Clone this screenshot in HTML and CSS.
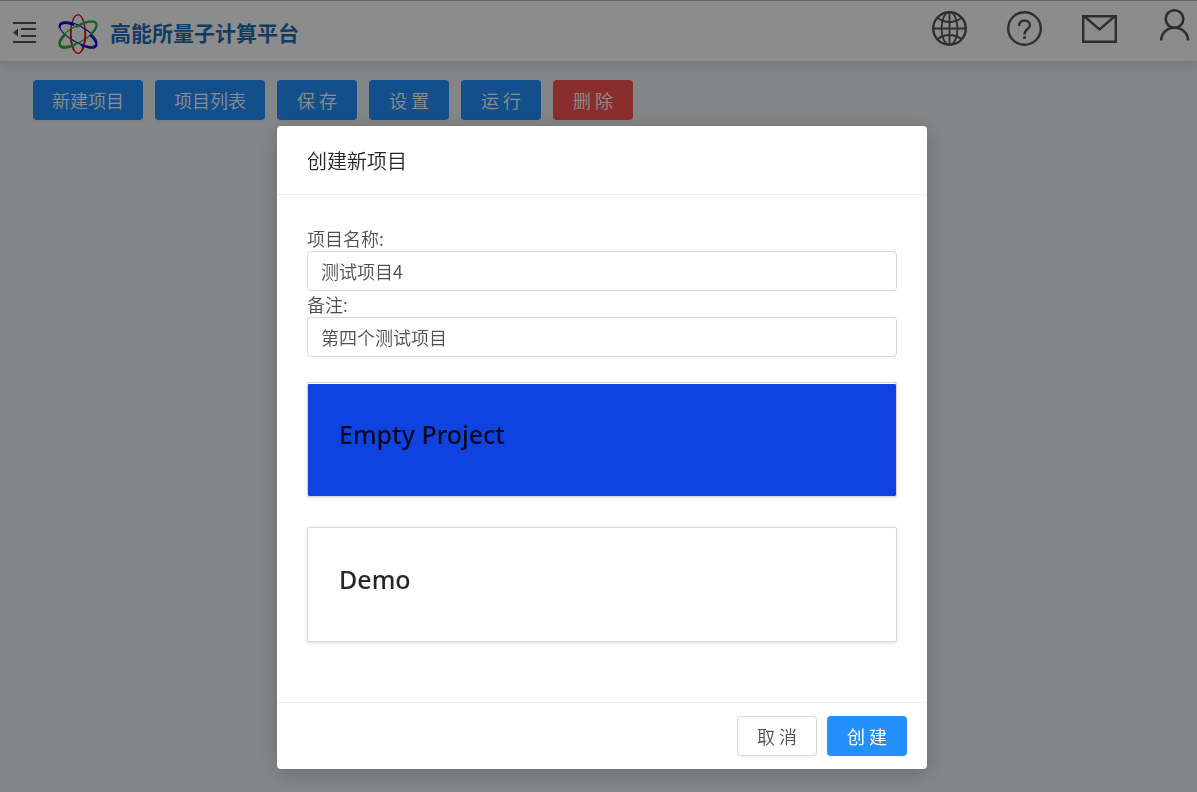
FILE: index.html
```html
<!DOCTYPE html>
<html lang="zh-CN">
<head>
<meta charset="utf-8">
<meta name="viewport" content="width=device-width, initial-scale=1">
<title>高能所量子计算平台</title>
<link rel="stylesheet" href="styles.css">
</head>
<body>
<header class="header">
  <button class="icon-btn menu-btn" type="button" aria-label="收起菜单">
    <svg width="24" height="22" viewBox="0 0 24 22" fill="none" stroke="currentColor" stroke-width="2">
      <path d="M1 1H24M9 7H24M9 14H24M1 20H24"/>
      <path d="M1 10.500L6 6.500V14.500Z" fill="currentColor" stroke="none"/>
    </svg>
  </button>
  <svg class="logo" width="42" height="42" viewBox="0 0 42 42" fill="none" aria-hidden="true">
    <ellipse cx="21" cy="22" rx="7.300" ry="19.300" stroke="#e01818" stroke-width="1.400"/>
    <ellipse cx="21" cy="22" rx="21" ry="8" transform="rotate(29 21 22)" stroke="#0808d0" stroke-width="1"/>
    <ellipse cx="21" cy="22" rx="21" ry="8" transform="rotate(-29 21 22)" stroke="#22b83a" stroke-width="1.200"/>
    <path d="M14 17C13.200 24 14.500 33 17 38.500M28 17C29 25 27.500 33 25 38.500" stroke="#e01818" stroke-width="1.800"/>
    <path d="M2.800 16C1.500 10 9 10 17 13M33 23C39 28 41 33 38 35C35 37 29 35 24 33" stroke="#0808d0" stroke-width="2.200"/>
    <path d="M19 15C29 9 37 8 39 11C40.500 14 38 18 34 22M8 23C3 28 1 33 4 35C7 37 14 35 19 32" stroke="#22b83a" stroke-width="2.200"/>
  </svg>
  <h1 class="brand">高能所量子计算平台</h1>
  <nav class="tools" aria-label="工具">
    <button class="icon-btn" type="button" aria-label="语言">
      <svg width="36" height="36" viewBox="0 0 36 36" fill="none" stroke="currentColor" stroke-width="1.800">
        <circle cx="17.500" cy="17.500" r="16.300" stroke-width="2.400"/>
        <ellipse cx="17.500" cy="17.500" rx="8" ry="16.300"/>
        <path d="M17.500 1.500V33.500M1.500 17.500H33.500M5.500 7Q17.500 15 29.500 7M5.500 28Q17.500 20 29.500 28"/>
      </svg>
    </button>
    <button class="icon-btn" type="button" aria-label="帮助">
      <svg width="36" height="36" viewBox="0 0 36 36" fill="none" stroke="currentColor" stroke-width="2.400">
        <circle cx="17.500" cy="17.500" r="16.300"/>
        <path d="M12 15C12 11.500 14.500 9.500 17.500 9.500S23 11.500 23 14.300C23 18 17.500 18 17.500 23.500"/>
        <circle cx="17.500" cy="26.500" r="1.600" fill="currentColor" stroke="none"/>
      </svg>
    </button>
    <button class="icon-btn" type="button" aria-label="邮件">
      <svg width="36" height="36" viewBox="0 0 36 36" fill="none" stroke="currentColor" stroke-width="2.400">
        <path d="M1.200 5.200H33.800V30.800H1.200ZM2.500 5.500L17.500 18.500L32.500 5.500"/>
      </svg>
    </button>
    <button class="icon-btn" type="button" aria-label="用户">
      <svg width="36" height="36" viewBox="0 0 36 36" fill="none" stroke="currentColor" stroke-width="2.600" overflow="visible">
        <circle cx="17.500" cy="8" r="8.800"/>
        <path d="M4.200 29.500C4.200 22 10 16.800 17.500 16.800S31 22 31 29.500"/>
      </svg>
    </button>
  </nav>
</header>
<main class="toolbar">
  <button class="btn btn-primary" type="button">新建项目</button>
  <button class="btn btn-primary" type="button">项目列表</button>
  <button class="btn btn-primary" type="button">保 存</button>
  <button class="btn btn-primary" type="button">设 置</button>
  <button class="btn btn-primary" type="button">运 行</button>
  <button class="btn btn-danger" type="button">删 除</button>
</main>
<div class="overlay">
  <section class="modal" role="dialog" aria-modal="true" aria-labelledby="modal-title">
    <header class="modal-header">
      <h2 class="modal-title" id="modal-title">创建新项目</h2>
    </header>
    <form class="modal-body" id="project-form">
      <label class="label" for="name">项目名称:</label>
      <input class="input" id="name" type="text" value="测试项目4">
      <label class="label" for="note">备注:</label>
      <input class="input" id="note" type="text" value="第四个测试项目">
      <div class="cards">
        <button class="card card-selected" type="button" aria-pressed="true">Empty Project</button>
        <button class="card" type="button" aria-pressed="false">Demo</button>
      </div>
    </form>
    <footer class="modal-footer">
      <button class="btn btn-default" type="button">取 消</button>
      <button class="btn btn-primary btn-create" type="submit" form="project-form">创 建</button>
    </footer>
  </section>
</div>
</body>
</html>
```
FILE: styles.css
```css
* { box-sizing: border-box; }

body {
  margin: 0;
  min-height: 100vh;
  background: #f0f2f5;
  color: #505050;
  font: 350 18px/26px "Noto Sans CJK SC", sans-serif;
}

button, input { font: inherit; }
svg { display: block; }

.header {
  display: flex;
  align-items: center;
  height: 61px;
  padding: 4px 4px 0 12px;
  border-top: 1px solid #bbb;
  background: #fff;
  box-shadow: 0 2px 12px rgba(0, 0, 0, 0.15);
}

.icon-btn {
  padding: 0;
  border: 0;
  background: none;
  color: #555;
  cursor: pointer;
}

.logo { margin-left: 21px; }

.brand {
  margin: 0 0 0 11px;
  padding-bottom: 3px;
  color: #1f6db5;
  font-size: 21px;
  font-weight: 700;
  line-height: 30px;
}

.tools {
  display: flex;
  gap: 39px;
  margin-left: auto;
  padding-bottom: 9px;
}

.toolbar {
  display: flex;
  flex-wrap: wrap;
  gap: 12px;
  padding: 19px 33px;
}

.btn {
  min-width: 80px;
  height: 40px;
  padding: 0 18px;
  border: 1px solid transparent;
  border-radius: 4px;
  box-shadow: 0 2px 0 rgba(0, 0, 0, 0.03);
  cursor: pointer;
}

.btn-primary { background: #2490fc; color: #fff; }
.btn-danger { background: #fc5254; color: #fff; }
.btn-default { border-color: #d9d9d9; background: #fff; color: #505050; }
.btn-create { font-weight: 400; }

.overlay {
  position: fixed;
  inset: 0;
  overflow: auto;
  padding: 126px 0 20px 7px;
  background: rgba(0, 0, 0, 0.45);
}

.modal {
  max-width: 650px;
  margin: 0 auto;
  border-radius: 4px;
  background: #fff;
  box-shadow: 0 4px 20px rgba(0, 0, 0, 0.2);
}

.modal-header {
  padding: 21px 30px 19px;
  border-bottom: 1px solid #f0f0f0;
}

.modal-title {
  margin: 0;
  color: #262626;
  font-size: 20px;
  font-weight: 350;
  line-height: 28px;
}

.modal-body { padding: 30px 30px 60px; }

.label { display: block; }

.input {
  display: block;
  width: 100%;
  height: 40px;
  padding: 0 13px;
  border: 1px solid #d9d9d9;
  border-radius: 4px;
  background: #fff;
  color: #505050;
}

.cards {
  display: grid;
  gap: 30px;
  padding-top: 25px;
}

.card {
  padding: 31px 31px 42px;
  border: 1px solid #d6d7dc;
  border-radius: 2px;
  background: #fff;
  box-shadow: 0 1px 3px rgba(0, 0, 0, 0.14);
  color: #262626;
  font: 500 25px/40px "Noto Sans", "Open Sans", sans-serif;
  text-align: left;
  cursor: pointer;
}

.card-selected {
  background: #0e43df;
  background-clip: padding-box;
  box-shadow: inset 0 1px #fff, 0 1px 3px rgba(0, 0, 0, 0.14);
  color: #020a22;
}

.modal-footer {
  display: flex;
  justify-content: flex-end;
  gap: 10px;
  padding: 13px 20px;
  border-top: 1px solid #f0f0f0;
}
```
